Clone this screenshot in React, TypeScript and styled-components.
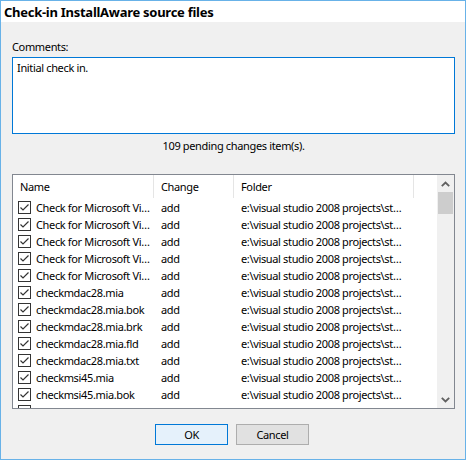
import React from "react";
import styled, { createGlobalStyle } from "styled-components";

const Global = createGlobalStyle`
  html, body { margin: 0; padding: 0; background: #f0f0f0; }
  * { box-sizing: border-box; }
`;

const FONT = `"Noto Sans", "Open Sans", "Liberation Sans", sans-serif`;

const Window = styled.div`
  width: 466px;
  height: 460px;
  border: 1px solid #68b2e8;
  background: #f0f0f0;
  display: flex;
  flex-direction: column;
  font-family: ${FONT};
  font-size: 11px;
  letter-spacing: -0.35px;
  color: #000;
`;

const TitleBar = styled.div`
  height: 21px;
  background: #fff;
  padding-left: 3px;
  display: flex;
  align-items: center;
  font-weight: 700;
  font-size: 13px;
  letter-spacing: -0.27px;
`;

const Body = styled.div`
  flex: 1;
  display: flex;
  flex-direction: column;
  padding: 17px 10px 0 11px;
`;

const Label = styled.div`
  line-height: 15px;
  height: 15px;
`;

const TextBox = styled.div`
  margin-top: 3px;
  height: 77px;
  background: #fff;
  border: 1px solid #0078d7;
  padding: 2px 4px;
  line-height: 15px;
`;

const Count = styled.div`
  margin-top: 4px;
  line-height: 15px;
  text-align: center;
`;

const List = styled.div`
  margin-top: 21px;
  height: 235px;
  border: 1px solid #828790;
  background: #fff;
  display: flex;
  overflow: hidden;
`;

const ListMain = styled.div`
  flex: 1;
  display: flex;
  flex-direction: column;
  overflow: hidden;
`;

const Header = styled.div`
  height: 24px;
  display: grid;
  grid-template-columns: 141px 80px 180px 1fr;
  flex-shrink: 0;
`;

const HeaderCell = styled.div<{ $sep?: boolean }>`
  display: flex;
  align-items: center;
  padding-left: 7px;
  border-right: 1px solid ${(p) => (p.$sep ? "#e5e5e5" : "transparent")};
  margin-bottom: 1px;
  white-space: nowrap;
`;

const Row = styled.div`
  height: 17px;
  display: grid;
  grid-template-columns: 141px 80px 180px 1fr;
  align-items: center;
  flex-shrink: 0;
  white-space: nowrap;
`;

const NameCell = styled.div`
  display: flex;
  align-items: center;
  padding-left: 5px;
  gap: 5px;
  overflow: hidden;
`;

const Cell = styled.div`
  padding-left: 7px;
  overflow: hidden;
`;

const Scrollbar = styled.div`
  width: 17px;
  background: #f0f0f0;
  display: flex;
  flex-direction: column;
  align-items: stretch;
`;

const ArrowBtn = styled.div`
  height: 17px;
  display: flex;
  align-items: center;
  justify-content: center;
`;

const Thumb = styled.div`
  height: 22px;
  background: #cdcdcd;
  margin: 0 1px;
`;

const Track = styled.div`
  flex: 1;
`;

const Footer = styled.div`
  display: flex;
  justify-content: center;
  gap: 8px;
  margin-top: 15px;
  padding-right: 3px;
`;

const Button = styled.div<{ $default?: boolean }>`
  width: 73px;
  height: 21px;
  display: flex;
  align-items: center;
  justify-content: center;
  background: ${(p) => (p.$default ? "#e5f1fb" : "#e1e1e1")};
  border: 1px solid ${(p) => (p.$default ? "#0078d7" : "#adadad")};
`;

const Check = () => (
  <svg width="13" height="13" viewBox="0 0 13 13" style={{ flexShrink: 0 }}>
    <rect x="0.5" y="0.5" width="12" height="12" fill="#fff" stroke="#333" />
    <path d="M2.5 6.5 L5 9 L10.5 3.5" fill="none" stroke="#333" strokeWidth="1.2" />
  </svg>
);

const Chevron = ({ up }: { up?: boolean }) => (
  <svg width="9" height="6" viewBox="0 0 9 6">
    <path
      d={up ? "M0.8 5.2 L4.5 1.5 L8.2 5.2" : "M0.8 0.8 L4.5 4.5 L8.2 0.8"}
      fill="none"
      stroke="#606060"
      strokeWidth="1.8"
    />
  </svg>
);

const FOLDER = "e:\\visual studio 2008 projects\\st…";
const names = [
  "Check for Microsoft Vi…",
  "Check for Microsoft Vi…",
  "Check for Microsoft Vi…",
  "Check for Microsoft Vi…",
  "Check for Microsoft Vi…",
  "checkmdac28.mia",
  "checkmdac28.mia.bok",
  "checkmdac28.mia.brk",
  "checkmdac28.mia.fld",
  "checkmdac28.mia.txt",
  "checkmsi45.mia",
  "checkmsi45.mia.bok",
  "checkmsi45.mia.brk",
];

export default function App() {
  return (
    <>
      <Global />
      <Window>
        <TitleBar>Check-in InstallAware source files</TitleBar>
        <Body>
          <Label>Comments:</Label>
          <TextBox>Initial check in.</TextBox>
          <Count>109 pending changes item(s).</Count>
          <List>
            <ListMain>
              <Header>
                <HeaderCell $sep>Name</HeaderCell>
                <HeaderCell $sep>Change</HeaderCell>
                <HeaderCell $sep>Folder</HeaderCell>
                <HeaderCell />
              </Header>
              {names.map((n, i) => (
                <Row key={i}>
                  <NameCell>
                    <Check />
                    <span>{n}</span>
                  </NameCell>
                  <Cell>add</Cell>
                  <Cell>{FOLDER}</Cell>
                  <Cell />
                </Row>
              ))}
            </ListMain>
            <Scrollbar>
              <ArrowBtn>
                <Chevron up />
              </ArrowBtn>
              <Thumb />
              <Track />
              <ArrowBtn>
                <Chevron />
              </ArrowBtn>
            </Scrollbar>
          </List>
          <Footer>
            <Button $default>OK</Button>
            <Button>Cancel</Button>
          </Footer>
        </Body>
      </Window>
    </>
  );
}
